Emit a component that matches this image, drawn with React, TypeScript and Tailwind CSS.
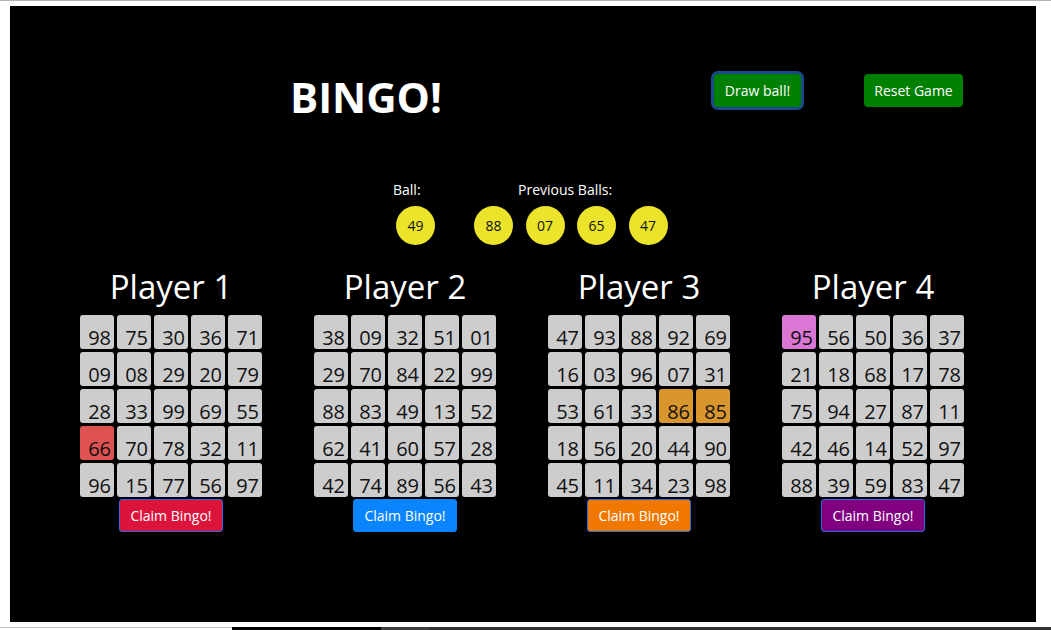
import React from 'react'

type Player = {
  name: string
  cells: string[]
  hit: Record<number, string>
  button: string
  border: string
}

const players: Player[] = [
  {
    name: 'Player 1',
    cells: ['98', '75', '30', '36', '71', '09', '08', '29', '20', '79', '28', '33', '99', '69', '55', '66', '70', '78', '32', '11', '96', '15', '77', '56', '97'],
    hit: { 15: 'bg-[#df5252]' },
    button: 'bg-[#dc143c]',
    border: 'border-[#1f6fe0]',
  },
  {
    name: 'Player 2',
    cells: ['38', '09', '32', '51', '01', '29', '70', '84', '22', '99', '88', '83', '49', '13', '52', '62', '41', '60', '57', '28', '42', '74', '89', '56', '43'],
    hit: {},
    button: 'bg-[#0a84ff]',
    border: 'border-[#0a84ff]',
  },
  {
    name: 'Player 3',
    cells: ['47', '93', '88', '92', '69', '16', '03', '96', '07', '31', '53', '61', '33', '86', '85', '18', '56', '20', '44', '90', '45', '11', '34', '23', '98'],
    hit: { 13: 'bg-[#d9962f]', 14: 'bg-[#d9962f]' },
    button: 'bg-[#f07800]',
    border: 'border-[#1f6fe0]',
  },
  {
    name: 'Player 4',
    cells: ['95', '56', '50', '36', '37', '21', '18', '68', '17', '78', '75', '94', '27', '87', '11', '42', '46', '14', '52', '97', '88', '39', '59', '83', '47'],
    hit: { 0: 'bg-[#da77d5]' },
    button: 'bg-[#800080]',
    border: 'border-[#1f6fe0]',
  },
]

const previous = ['88', '07', '65', '47']

function Ball({ n }: { n: string }) {
  return (
    <div className="w-[39px] h-[39px] rounded-full bg-[#ebe42b] flex items-center justify-center text-[14px] text-[#111]">
      {n}
    </div>
  )
}

function Card({ p }: { p: Player }) {
  return (
    <div className="w-[234px] flex flex-col items-center">
      <h2 className="text-[33px] leading-none text-white mb-[12px]">{p.name}</h2>
      <div className="grid grid-cols-[repeat(5,34px)] gap-[3px]">
        {p.cells.map((c, i) => (
          <div
            key={i}
            className={`h-[34px] rounded-[3px] flex items-end justify-end pr-[3px] pb-[1px] text-[20px] leading-none text-[#111] ${
              p.hit[i] ?? 'bg-[#cdcdce]'
            }`}
          >
            {c}
          </div>
        ))}
      </div>
      <button
        className={`mt-[2px] w-[104px] h-[33px] rounded-[3px] border text-[14px] text-white ${p.button} ${p.border}`}
      >
        Claim Bingo!
      </button>
    </div>
  )
}

export default function App() {
  return (
    <div className="w-[1051px] h-[630px] bg-white flex flex-col border-t border-[#b4b4b4] font-['Open_Sans',sans-serif]">
      <div className="ml-[10px] mt-[5px] w-[1026px] h-[616px] bg-black pt-[68px]">
        {/* header */}
        <div className="flex items-start">
          <div className="w-[704px] pl-[8px] mt-[2px] text-center">
            <h1 className="text-[42px] leading-none font-bold text-white">BINGO!</h1>
          </div>
          <button className="w-[87px] h-[33px] rounded-[4px] bg-[#008000] text-white text-[14px] ring-[3px] ring-[#1b4a8a]">
            Draw ball!
          </button>
          <button className="ml-[63px] w-[99px] h-[33px] rounded-[4px] bg-[#008000] text-white text-[14px]">
            Reset Game
          </button>
        </div>

        {/* balls */}
        <div className="mt-[62px] flex pl-[383px] text-white text-[14px]">
          <div className="flex flex-col">
            <span className="leading-[19px]">Ball:</span>
            <div className="mt-[7px] ml-[3px]">
              <Ball n="49" />
            </div>
          </div>
          <div className="ml-[39px] flex flex-col">
            <span className="leading-[19px] pl-[44px]">Previous Balls:</span>
            <div className="mt-[7px] flex gap-[12.5px]">
              {previous.map((n) => (
                <Ball key={n} n={n} />
              ))}
            </div>
          </div>
        </div>

        {/* players */}
        <div className="mt-[25px] flex justify-center pr-[2px]">
          {players.map((p) => (
            <Card key={p.name} p={p} />
          ))}
        </div>
      </div>
      <div className="mt-auto flex h-[3px]">
        <div className="w-[232px] border-t border-[#c4c4c4]" />
        <div className="w-[149px] bg-black" />
        <div className="w-[48px] bg-[#404040]" />
        <div className="flex-1 bg-[#333]" />
      </div>
    </div>
  )
}
